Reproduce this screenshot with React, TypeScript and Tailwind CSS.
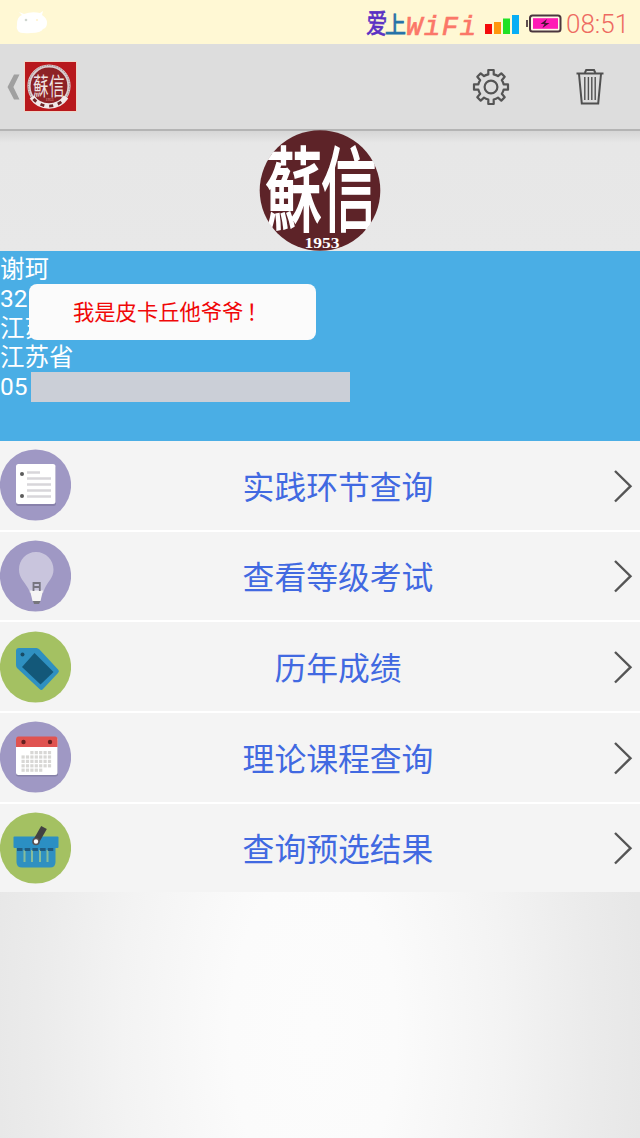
import type { ReactNode } from 'react';

function Seal() {
  return (
    <svg width="122" height="121" viewBox="0 0 122 121" className="block">
      <defs>
        <clipPath id="sealClip">
          <circle cx="61" cy="60.5" r="60.5" />
        </clipPath>
      </defs>
      <circle cx="61" cy="60.5" r="60.3" fill="#5d2328" />
      <g clipPath="url(#sealClip)" fill="#fff" stroke="#fff" strokeWidth="1.3" fontFamily="'Noto Sans CJK TC', sans-serif">
        <text transform="translate(6 94) scale(1.02 1.64)" fontSize="56">蘇</text>
        <text transform="translate(62 94) scale(1 1.64)" fontSize="56">信</text>
      </g>
      <text x="63" y="117.5" textAnchor="middle" fill="#fff" fontFamily="'Liberation Serif', serif" fontWeight="700" fontSize="14" textLength="35" lengthAdjust="spacingAndGlyphs">1953</text>
    </svg>
  );
}

function AppIcon() {
  return (
    <svg width="53" height="51" viewBox="0 0 53 51">
      <rect width="53" height="51" fill="#f0d6c8" />
      <rect x="1" y="1" width="51" height="49" fill="#b8181c" />
      <circle cx="25" cy="25" r="20" fill="#8d2226" stroke="#d9cfd0" strokeWidth="3.2" />
      <circle cx="25" cy="25" r="20.5" fill="none" stroke="#8f6a6c" strokeWidth="0.7" strokeDasharray="1.5 1" />
      <path d="M8 36 A20.5 20.5 0 0 0 42 36" fill="none" stroke="#f1e8e8" strokeWidth="5.5" />
      <path d="M9.5 38 A20.5 20.5 0 0 0 40.5 38" fill="none" stroke="#6d2528" strokeWidth="2.8" strokeDasharray="4 4.8" />
      <g fill="#efe4e4" fontFamily="'Noto Sans CJK TC', sans-serif">
        <text transform="translate(9 34) scale(0.92 1.4)" fontSize="17">蘇</text>
        <text transform="translate(25 34) scale(0.92 1.4)" fontSize="17">信</text>
      </g>
      <text x="25.5" y="40" textAnchor="middle" fontSize="4" fill="#e5a09a" fontFamily="'Liberation Serif', serif">1953</text>
    </svg>
  );
}

function StatusBar() {
  return (
    <header className="flex h-[44px] shrink-0 items-center justify-between bg-[#fff8d4] pl-[16px] pr-[10px] pt-[2px]">
      <svg width="32" height="24" viewBox="0 0 32 24">
        <path d="M1 13 Q1 6 6 4 L3 1 L8 3 Q16 0 24 2 L27 0 L26 4 Q31 7 31 12 Q31 17 27 18 Q25 22 15 22 Q4 23 2 20 Q0 17 1 13Z" fill="#fff" />
        <circle cx="10" cy="9" r="1.3" fill="#cfd6cf" />
        <circle cx="21" cy="9" r="1.1" fill="#fff3cf" />
      </svg>
      <div className="flex items-center">
        <svg width="116" height="40" viewBox="0 0 116 40" className="mr-[4px]">
          <g fontFamily="'Noto Sans CJK SC', sans-serif">
            <text transform="translate(1 30) rotate(3) scale(0.86 1.16)" fontSize="24" fill="#5a30c4" stroke="#5a30c4" strokeWidth="0.6">爱</text>
            <text transform="translate(20 30) scale(0.95 1.05)" fontSize="22" fill="#2471a8" stroke="#2471a8" strokeWidth="0.8">上</text>
          </g>
          <text x="41" y="31.5" fontFamily="'Liberation Mono', monospace" fontStyle="italic" fontSize="27" textLength="70" lengthAdjust="spacing" fill="#fb7768" stroke="#fb7768" strokeWidth="0.7">WiFi</text>
        </svg>
        <svg width="35" height="22" viewBox="0 0 35 22" className="mt-[1px]">
          <rect x="0" y="11" width="7" height="10" fill="#f40b0b" />
          <rect x="9" y="9" width="7" height="12" fill="#ff970d" />
          <rect x="18" y="5.5" width="7" height="15.5" fill="#21e126" />
          <rect x="27" y="2" width="7" height="19" fill="#08aef5" />
        </svg>
        <svg width="36" height="20" viewBox="0 0 36 20" className="ml-[6px] mt-[1px]">
          <rect x="0" y="6" width="2" height="7" fill="#5f4f50" />
          <rect x="4" y="1.5" width="30.5" height="16" rx="2.5" fill="#fff8e6" stroke="#4b363e" strokeWidth="2" />
          <rect x="7" y="4.2" width="25" height="10.6" fill="#ff1bb5" />
          <path d="M21 5 L14.5 10 H18.5 L16.5 14 L23.5 9 H19.2Z" fill="#4a1434" />
        </svg>
        <span className="ml-[4px] mt-[2px] block w-[64px] whitespace-nowrap font-[Roboto] text-[26px] font-light leading-[40px] text-[#ee6a61]">08:51</span>
      </div>
    </header>
  );
}

function GearIcon() {
  return (
    <svg width="38" height="38" viewBox="0 0 38 38" fill="none" stroke="#555" strokeWidth="2.2" strokeLinejoin="round">
      <path d="M16.3 2 h5.4 v4.4 q2.8 .7 4.3 1.8 l3.3-2.8 3.4 3.4 -2.9 3.4 q1.3 2 1.8 4.1 h4.4 v5.4 h-4.4 q-.5 2.1-1.8 4.1 l2.9 3.4 -3.4 3.4 -3.3-2.9 q-1.8 1.2-4.3 1.8 V36 h-5.4 v-4.5 q-2.5-.6-4.3-1.8 l-3.3 2.9 -3.4-3.4 2.9-3.4 q-1.3-2-1.8-4.1 H2 v-5.4 h4.4 q.5-2.1 1.8-4.1 L5.3 8.8 l3.4-3.4 L12 8.2 q1.5-1.1 4.3-1.8Z" />
      <circle cx="19" cy="19" r="6.4" />
    </svg>
  );
}

function TrashIcon() {
  return (
    <svg width="28" height="38" viewBox="0 0 28 38" fill="none" stroke="#505050" strokeWidth="2">
      <path d="M0.5 5.5 H27.5" />
      <path d="M8.8 5 L10.2 2 H18 L19.4 5" />
      <path d="M3 6 L5.8 35.5 H22.2 L25 6" />
      <path d="M8.8 9 V32 M12.4 9 V32 M15.8 9 V32 M19.2 9 V32" strokeWidth="1.4" />
    </svg>
  );
}

function ActionBar() {
  return (
    <nav className="flex h-[87px] shrink-0 items-center border-b-2 border-[#b4b4b4] bg-[#dddddd] pl-[7px] pr-[36px]">
      <svg width="13" height="26" viewBox="0 0 13 26" className="mr-[4px]">
        <path d="M7 0.5 H12.5 L6.4 13 L12.5 25.5 H7 L0.5 13Z" fill="#a0a0a0" />
      </svg>
      <AppIcon />
      <div className="ml-auto flex items-center gap-[66px]">
        <GearIcon />
        <TrashIcon />
      </div>
    </nav>
  );
}

function Disc({ color, children }: { color: string; children: ReactNode }) {
  return (
    <svg width="71" height="72" viewBox="0 0 71 72" className="shrink-0">
      <circle cx="35.5" cy="36" r="35.6" fill={color} />
      {children}
    </svg>
  );
}

const PURPLE = '#9f98c4';
const GREEN = '#a4c162';

const noteIcon = (
  <Disc color={PURPLE}>
    <rect x="16" y="16.5" width="40" height="40.5" rx="2.5" fill="#8881ab" />
    <rect x="16" y="15" width="39.5" height="40" rx="2.5" fill="#fff" />
    <circle cx="22" cy="25" r="2" fill="#5c5c5c" />
    <circle cx="22" cy="47" r="2" fill="#5c5c5c" />
    <path d="M27 23.5 H40 M27 29.5 H51 M27 35.5 H51 M27 41.5 H51 M27 47.5 H51" stroke="#d8d6da" strokeWidth="2.4" />
  </Disc>
);

const bulbIcon = (
  <Disc color={PURPLE}>
    <path d="M36 12 C26 12 19 20 19 29.5 C19 38 24 41 28.5 49 L30 53 H43 L44.5 49 C48 41 53.5 38 53.5 29.5 C53.5 20 46 12 36 12Z" fill="#c9c5dd" />
    <path d="M30 50.5 H43 L40.5 61 H32.5Z" fill="#f6f5f4" />
    <path d="M33.5 51 V43 H39.8 V51 M33.5 47 H39.8" fill="none" stroke="#777580" strokeWidth="1.8" />
    <path d="M33 61 H40.5 L39 64 H34Z" fill="#77767c" />
  </Disc>
);

const tagIcon = (
  <Disc color={GREEN}>
    <path d="M19 17 H36.5 Q38 17 39.5 18.5 L58.5 39 Q59.5 40.5 58 42 L43 58 Q41.5 60 39.5 58 L17.5 37.5 Q16 36 16 34 V20 Q16 17 19 17Z" fill="#2f90c1" />
    <path d="M34.5 22 L53.5 41 L40.5 53.5 L22 36Z" fill="#135879" />
    <circle cx="22.5" cy="23.5" r="2" fill="#184b66" />
  </Disc>
);

const calendarDays = Array.from({ length: 35 }, (_, i) => i).filter((i) => i > 1 && i < 33);

const calendarIcon = (
  <Disc color={PURPLE}>
    <rect x="16" y="18" width="42" height="37.5" rx="2.5" fill="#8580a7" />
    <rect x="16" y="16" width="41.5" height="38" rx="2.5" fill="#fff" />
    <path d="M16 26 V18 Q16 15.5 18.5 15.5 H55 Q57.5 15.5 57.5 18 V26Z" fill="#e05350" />
    <circle cx="23.5" cy="21" r="2.2" fill="#66201f" />
    <circle cx="50" cy="21" r="2.2" fill="#66201f" />
    {calendarDays.map((i) => (
      <rect key={i} x={21.5 + (i % 7) * 4.4} y={30 + Math.floor(i / 7) * 4.4} width="3.2" height="3.2" fill="#d8d7d5" />
    ))}
  </Disc>
);

const basketIcon = (
  <Disc color={GREEN}>
    <path d="M16.5 34 H55.5 V50 Q55.5 55.5 50 55.5 H22 Q16.5 55.5 16.5 50Z" fill="#2f90c1" />
    <path d="M24.5 38 V50 M32 38 V50 M40 38 V50 M47.5 38 V50" stroke="#86bd9b" strokeWidth="2" />
    <path d="M17 37.5 H55" stroke="#205b80" strokeWidth="3" strokeDasharray="5.5 2.2" />
    <rect x="13.5" y="24.5" width="45" height="11.5" rx="1" fill="#2b8fc3" />
    <path d="M36 29.5 L44 15.5" stroke="#424142" strokeWidth="6.5" />
    <circle cx="36" cy="29.5" r="3" fill="#fff" stroke="#575152" strokeWidth="1.6" />
  </Disc>
);

const items = [
  { label: '实践环节查询', icon: noteIcon },
  { label: '查看等级考试', icon: bulbIcon },
  { label: '历年成绩', icon: tagIcon },
  { label: '理论课程查询', icon: calendarIcon },
  { label: '查询预选结果', icon: basketIcon },
];

function MenuRow({ label, icon }: { label: string; icon: ReactNode }) {
  return (
    <li className="flex h-[88.67px] items-center bg-[#f4f4f4]">
      {icon}
      <span className="flex-1 pt-[5px] text-center text-[31.8px] leading-[44px] text-[#4169e1]">{label}</span>
      <svg width="35" height="34" viewBox="0 0 35 34" fill="none" stroke="#555" strokeWidth="2.4" className="mt-[1px] shrink-0">
        <path d="M10 2 L25.5 17.2 L10 32.5" />
      </svg>
    </li>
  );
}

const infoLines = ['谢珂', '32', '江苏', '江苏省', '05'];

export default function App() {
  return (
    <div className="flex h-[1138px] w-[640px] flex-col overflow-hidden bg-[#e8e8e8] font-[Roboto,'Noto_Sans_CJK_SC',sans-serif]">
      <StatusBar />
      <ActionBar />
      <section className="flex h-[120px] shrink-0 items-end justify-center bg-linear-to-b from-[#d6d6d6] via-[#e7e7e7] via-10% to-[#e8e8e8]">
        <Seal />
      </section>
      <section className="relative h-[190px] shrink-0 bg-[#4aaee5] pt-[4px] text-[24.5px] leading-[29.33px] text-white">
        {infoLines.map((line) => (
          <p key={line} className="h-[29.33px] whitespace-nowrap">{line}</p>
        ))}
        <div className="absolute left-[31px] top-[121px] h-[30px] w-[319px] bg-[#cbcfd7]" />
        <div className="absolute left-[29px] top-[33px] h-[56px] w-[287px] rounded-[8px] bg-[#fbfbfb] pl-[44px] text-[21.3px] leading-[58px] text-[#f00808]">
          我是皮卡丘他爷爷<span className="ml-[3px]">！</span>
        </div>
      </section>
      <ul className="flex shrink-0 flex-col gap-[2px] bg-white">
        {items.map((item) => (
          <MenuRow key={item.label} label={item.label} icon={item.icon} />
        ))}
      </ul>
      <div className="flex-1 bg-[radial-gradient(ellipse_330px_660px_at_49%_57%,#fcfcfc_0%,#fbfbfb_25%,#f3f3f3_58%,#ebebeb_84%,#e7e7e7_100%)]" />
    </div>
  );
}
